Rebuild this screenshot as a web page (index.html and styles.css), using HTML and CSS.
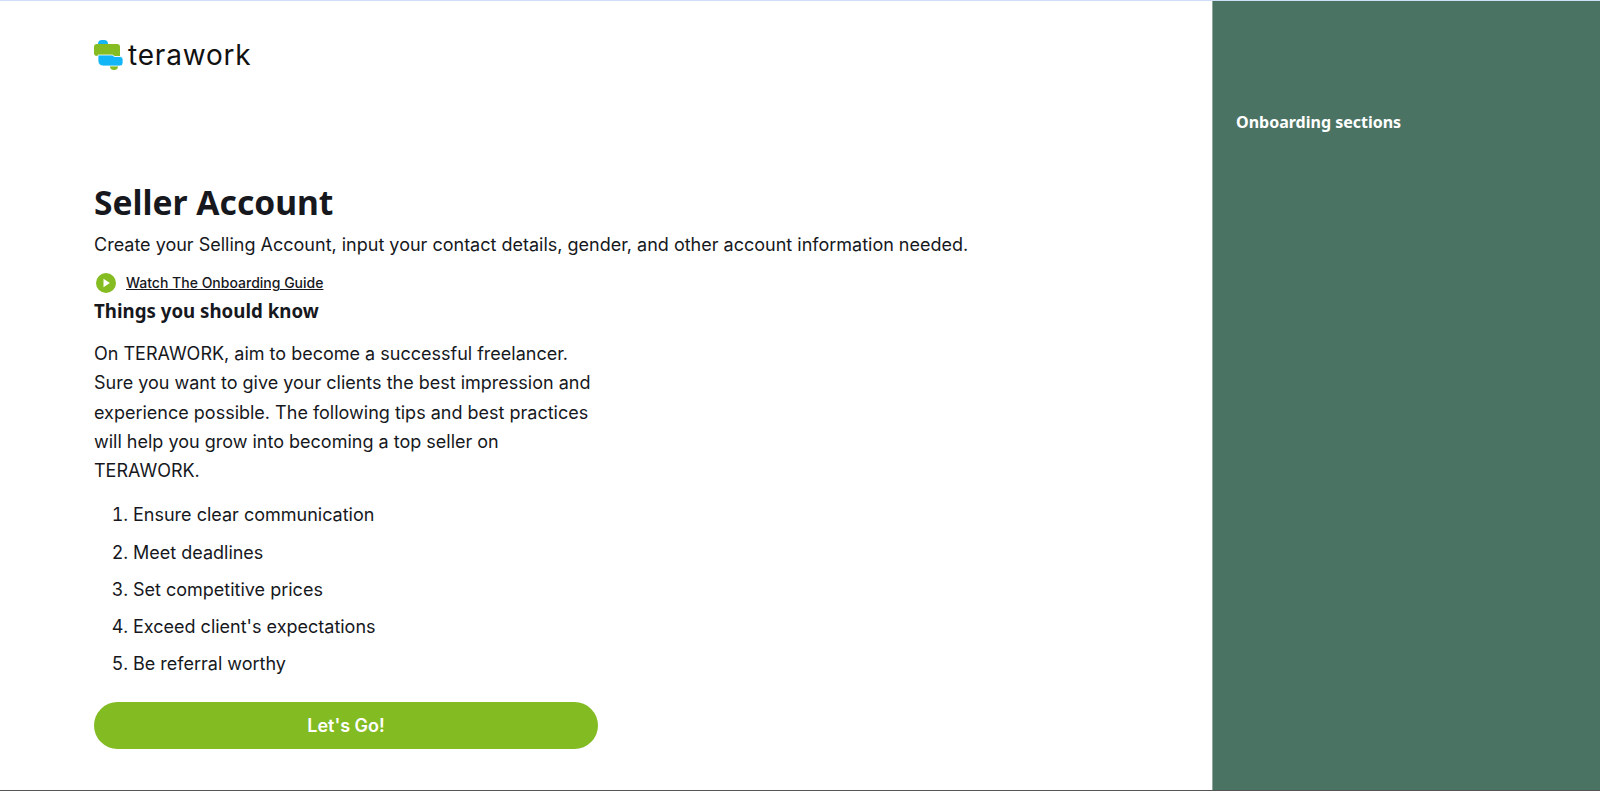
FILE: index.html
```html
<!DOCTYPE html>
<html lang="en">
<head>
  <meta charset="UTF-8" />
  <meta name="viewport" content="width=device-width, initial-scale=1.0"/>
  <title>Seller Account | Terawork</title>
  <link rel="stylesheet" href="styles.css">
</head>

<body>
  <div class="page">
    <main class="content">
      <div class="brand">
        <svg class="brand-mark" viewBox="0 0 30 30" width="30" height="30" aria-hidden="true">
          <rect x="4" y="0" width="10" height="8" rx="4" fill="#12b5f5"/>
          <rect x="16" y="22" width="8" height="8" rx="4" fill="#84bc22"/>
          <path d="M3 4h20a3 3 0 0 1 3 3v9H3a3 3 0 0 1-3-3V7a3 3 0 0 1 3-3z" fill="#84bc22"/>
          <path d="M4 15h15a2 2 0 0 0 2 1.500h5a3 3 0 0 1 3 3V23a3 3 0 0 1-3 3H9a5 5 0 0 1-5-5z" fill="#12b5f5" stroke="#fff" stroke-width="0.8"/>
        </svg>
        <span class="brand-name">terawork</span>
      </div>

      <h1>Seller Account</h1>
      <p class="lead">Create your Selling Account, input your contact details, gender, and other account information needed.</p>

      <a class="guide-link" href="#">
        <svg viewBox="0 0 20 20" width="20" height="20" aria-hidden="true">
          <circle cx="10" cy="10" r="10" fill="#84bc22"/>
          <path d="M7.5 5.8v8.4l6.4-4.2z" fill="#fff"/>
        </svg>
        <span>Watch The Onboarding Guide</span>
      </a>

      <section class="tips">
        <h2>Things you should know</h2>
        <p>On TERAWORK, aim to become a successful freelancer. Sure you want to give your clients the best impression and experience possible. The following tips and best practices will help you grow into becoming a top seller on TERAWORK.</p>
        <ol>
          <li>Ensure clear communication</li>
          <li>Meet deadlines</li>
          <li>Set competitive prices</li>
          <li>Exceed client's expectations</li>
          <li>Be referral worthy</li>
        </ol>
        <button class="go-btn">Let's Go!</button>
      </section>
    </main>

    <aside class="sidebar">
      <h3>Onboarding sections</h3>
    </aside>
  </div>
</body>
</html>
```

FILE: styles.css
```css
* {
  margin: 0;
  padding: 0;
  box-sizing: border-box;
}

html, body {
  height: 100%;
  background: #fff;
  font-family: "Inter", "Noto Sans", sans-serif;
  color: #16181d;
  overflow: hidden;
}

.page {
  height: 100%;
  display: flex;
  border-top: 1px solid #cfdff5;
  border-bottom: 1px solid #555;
}

.content {
  flex: 1;
  padding: 39px 0 0 94px;
}

.brand {
  display: flex;
  align-items: center;
  gap: 4px;
  height: 30px;
}

.brand-name {
  font-size: 28px;
  letter-spacing: 0.8px;
  color: #111;
}

h1 {
  margin-top: 109px;
  font-family: "Noto Sans", sans-serif;
  font-size: 33.6px;
  line-height: 46px;
  font-weight: 700;
}

.lead {
  margin-top: 6px;
  font-size: 18px;
  line-height: 28px;
}

.guide-link {
  display: flex;
  align-items: center;
  gap: 10px;
  margin-top: 10px;
  height: 27px;
  padding-left: 2px;
  font-size: 14px;
  font-weight: 500;
  color: #16181d;
}

.tips {
  width: 504px;
}

.tips h2 {
  font-family: "Noto Sans", sans-serif;
  font-size: 18.7px;
  line-height: 30px;
  font-weight: 700;
}

.tips p {
  margin-top: 13px;
  font-size: 18px;
  line-height: 29.25px;
}

.tips ol {
  margin-top: 15px;
  padding-left: 39px;
  font-size: 18px;
}

.tips li {
  line-height: 29.25px;
  margin-bottom: 8px;
}

.go-btn {
  display: block;
  width: 100%;
  height: 47px;
  margin-top: 23px;
  border: none;
  border-radius: 24px;
  background: #83bb23;
  color: #fff;
  font-family: inherit;
  font-size: 18px;
  font-weight: 600;
  cursor: pointer;
}

.sidebar {
  width: 388px;
  background: #4b7364;
  border-left: 1px solid #8fa89c;
  padding: 111px 23px 0;
}

.sidebar h3 {
  font-family: "Noto Sans", sans-serif;
  color: #fff;
  font-size: 16px;
  line-height: 20px;
  font-weight: 700;
}
```
